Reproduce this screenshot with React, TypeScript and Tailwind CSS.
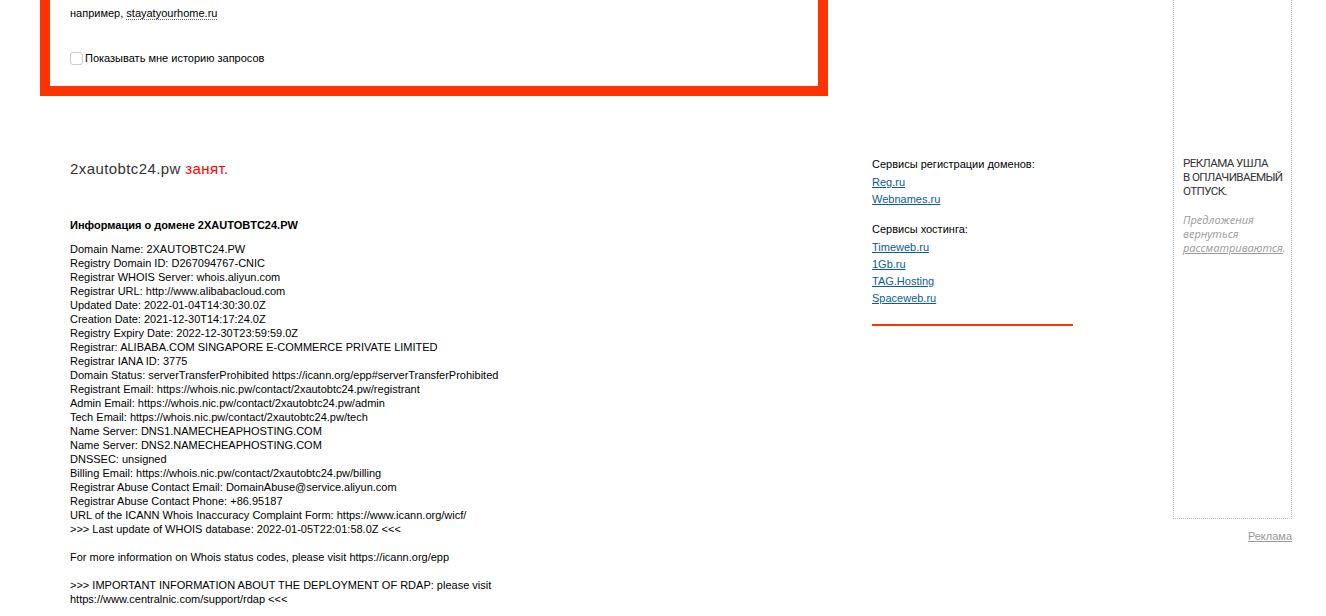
import React from 'react';

const whoisLines: string[] = [
    'Domain Name: 2XAUTOBTC24.PW',
    'Registry Domain ID: D267094767-CNIC',
    'Registrar WHOIS Server: whois.aliyun.com',
    'Registrar URL: http://www.alibabacloud.com',
    'Updated Date: 2022-01-04T14:30:30.0Z',
    'Creation Date: 2021-12-30T14:17:24.0Z',
    'Registry Expiry Date: 2022-12-30T23:59:59.0Z',
    'Registrar: ALIBABA.COM SINGAPORE E-COMMERCE PRIVATE LIMITED',
    'Registrar IANA ID: 3775',
    'Domain Status: serverTransferProhibited https://icann.org/epp#serverTransferProhibited',
    'Registrant Email: https://whois.nic.pw/contact/2xautobtc24.pw/registrant',
    'Admin Email: https://whois.nic.pw/contact/2xautobtc24.pw/admin',
    'Tech Email: https://whois.nic.pw/contact/2xautobtc24.pw/tech',
    'Name Server: DNS1.NAMECHEAPHOSTING.COM',
    'Name Server: DNS2.NAMECHEAPHOSTING.COM',
    'DNSSEC: unsigned',
    'Billing Email: https://whois.nic.pw/contact/2xautobtc24.pw/billing',
    'Registrar Abuse Contact Email: DomainAbuse@service.aliyun.com',
    'Registrar Abuse Contact Phone: +86.95187',
    'URL of the ICANN Whois Inaccuracy Complaint Form: https://www.icann.org/wicf/',
    '>>> Last update of WHOIS database: 2022-01-05T22:01:58.0Z <<<',
    '',
    'For more information on Whois status codes, please visit https://icann.org/epp',
    '',
    '>>> IMPORTANT INFORMATION ABOUT THE DEPLOYMENT OF RDAP: please visit',
    'https://www.centralnic.com/support/rdap <<<',
];

const registrars = ['Reg.ru', 'Webnames.ru'];
const hosting = ['Timeweb.ru', '1Gb.ru', 'TAG.Hosting', 'Spaceweb.ru'];

const ServiceLink: React.FC<{ label: string }> = ({ label }) => (
    <div className="h-[17px] leading-[17px]">
        <a href="#" className="text-[#0b5c94] underline underline-offset-1">{label}</a>
    </div>
);

export default function App() {
    return (
        <div className="flex bg-white min-h-[616px] text-[11px] leading-[14px] text-black font-['Liberation_Sans',Arial,sans-serif]">
            {/* main column */}
            <div className="w-[828px] shrink-0 pl-10">
                <div className="border-[10px] border-t-0 border-[#ff3300] pl-5 pt-[6px] h-[96px]">
                    <div>
                        например,{' '}
                        <span className="border-b border-dotted border-[#666]">stayatyourhome.ru</span>
                    </div>
                    <label className="flex items-center mt-[31px]">
                        <input type="checkbox" className="w-[13px] h-[13px] m-0 appearance-none border border-[#ccc] rounded-[3px] bg-white" />
                        <span className="ml-[2px]">Показывать мне историю запросов</span>
                    </label>
                </div>

                <div className="pl-[30px] pt-[63px]">
                    <div className="text-[15px] leading-[20px] tracking-[0.4px] text-[#333]">
                        2xautobtc24.pw <span className="text-[#f00]">занят.</span>
                    </div>
                    <div className="mt-[39px] font-bold">Информация о домене 2XAUTOBTC24.PW</div>
                    <div className="mt-[10px]">
                        {whoisLines.map((line, i) => (
                            <div key={i} className="h-[14px] whitespace-pre">{line}</div>
                        ))}
                    </div>
                </div>
            </div>

            {/* services column */}
            <div className="w-[201px] shrink-0 ml-[44px] pt-[157px]">
                <div className="h-[17px]">Сервисы регистрации доменов:</div>
                {registrars.map((r) => <ServiceLink key={r} label={r} />)}
                <div className="h-[17px] mt-[14px]">Сервисы хостинга:</div>
                {hosting.map((h) => <ServiceLink key={h} label={h} />)}
                <div className="mt-[17px] h-[2px] bg-[#ff3300]" />
            </div>

            {/* ad column */}
            <div className="w-[119px] shrink-0 ml-[100px]">
                <div className="h-[519px] border border-t-0 border-dotted border-[#bbb] px-[9px] pt-[156px]">
                    <div className="whitespace-nowrap font-['Roboto',sans-serif] text-[11.6px] leading-[14px] tracking-[-0.6px] text-[#333] uppercase">
                        Реклама ушла<br />в оплачиваемый<br />отпуск.
                    </div>
                    <div className="mt-[15px] italic text-[#999] text-[11px] leading-[14px] font-['Open_Sans',sans-serif]">
                        Предложения вернуться{' '}
                        <span className="underline">рассматриваются</span>.
                    </div>
                </div>
                <div className="text-right mt-[10px]">
                    <a href="#" className="text-[#999] underline">Реклама</a>
                </div>
            </div>
        </div>
    );
}
